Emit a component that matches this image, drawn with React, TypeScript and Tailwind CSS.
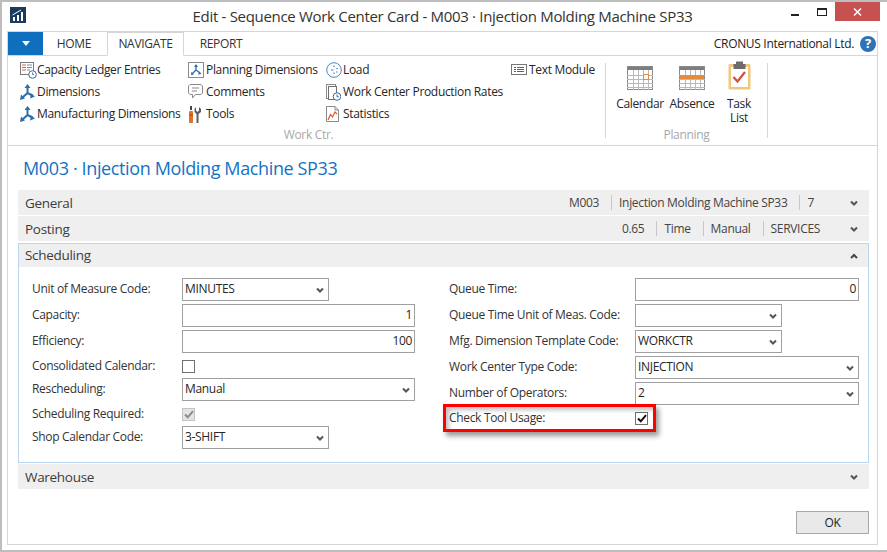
import React from "react";

const FONT = { fontFamily: '"Open Sans", "Noto Sans", sans-serif' };

const Dim = () => (
  <svg width="15" height="16" viewBox="0 0 15 16" fill="none" stroke="#2e6da8" strokeWidth="2">
    <path d="M7.500 9V3M7.500 9L2.500 13.500M7.500 9L12.500 11.500" />
    <path d="M7.500 0L10.500 4H4.500Z M0 16L1 10.500L5 14.500Z M15 12.500L10 14.500L11 9.500Z" fill="#2e6da8" stroke="none" />
  </svg>
);
const PlanDim = () => (
  <svg width="16" height="16" viewBox="0 0 16 16" fill="none">
    <rect x="0.500" y="0.500" width="15" height="15" stroke="#8a8a8a" />
    <path d="M8 8V4M8 8L4 12M8 8L12 11" stroke="#2e6da8" strokeWidth="1.300" />
    <path d="M8 2L10 5H6Z M3 13L3.400 9.800L6 12.400Z M13.500 12L10 12.400L11.400 9.400Z" fill="#2e6da8" />
  </svg>
);
const Ledger = () => (
  <svg width="17" height="17" viewBox="0 0 17 17" fill="none">
    <rect x="0.500" y="0.500" width="13" height="12" stroke="#7b7b7b" fill="#fff" />
    <path d="M2 3h4M2 5.500h4M2 8h4" stroke="#d9623a" />
    <path d="M7 3h5M7 5.500h5M7 8h3" stroke="#8a8a8a" />
    <circle cx="12.500" cy="12.500" r="3.800" fill="#fff" stroke="#2e6da8" />
    <path d="M12.500 10.500v2h1.500" stroke="#2e6da8" strokeWidth="0.800" />
  </svg>
);
const Comment = () => (
  <svg width="15" height="16" viewBox="0 0 15 16" fill="none">
    <path d="M2 .5H13L14.500 2V9L13 10.500H7.500L4.500 14V10.500H2L.5 9V2Z" stroke="#8a8a8a" />
    <path d="M4 4h7M4 7h5" stroke="#8a8a8a" />
  </svg>
);
const Tools = () => (
  <svg width="13" height="17" viewBox="0 0 13 17" fill="none">
    <path d="M3 0v4" stroke="#444" strokeWidth="2" />
    <rect x="1" y="5" width="4" height="12" rx="1" fill="#e0702c" />
    <path d="M1 9h4" stroke="#a84e18" />
    <path d="M8 1v3.500l1.500 1.500L11 4.500V1L13 3V6L10.500 8V17H8.500V8L6.500 6V3Z" fill="#5f5f5f" />
  </svg>
);
const Load = () => (
  <svg width="16" height="16" viewBox="0 0 16 16" fill="none">
    <circle cx="8" cy="8" r="7.300" stroke="#4c86bd" />
    <path d="M8 3.500v1.500M11.500 6l-1 1M11.500 10h-1.500M8 12v-1.500M5 8H7.500" stroke="#4c86bd" strokeWidth="1.200" />
  </svg>
);
const Rates = () => (
  <svg width="15" height="17" viewBox="0 0 15 17" fill="none">
    <rect x="0.500" y="0.500" width="9" height="14" stroke="#8a8a8a" fill="#fff" />
    <rect x="2.500" y="2.500" width="8" height="13" stroke="#6f6f6f" fill="#fff" />
    <circle cx="11" cy="12.500" r="3.800" fill="#fff" stroke="#2e6da8" />
    <path d="M11 10.500v2.200h1.800" stroke="#2e6da8" />
  </svg>
);
const Stats = () => (
  <svg width="13" height="16" viewBox="0 0 13 16" fill="none">
    <path d="M.5.500H9L12.500 4V15.500H.5Z" stroke="#8a8a8a" fill="#fff" />
    <path d="M9 .500V4H12.500" stroke="#8a8a8a" />
    <path d="M2 14L4.500 8.500L6.500 11L9 6L11 8" stroke="#e0552c" strokeWidth="1.200" />
  </svg>
);
const TextModule = () => (
  <svg width="16" height="12" viewBox="0 0 16 12" fill="none">
    <rect x="0.500" y="0.500" width="15" height="10" stroke="#777" />
    <path d="M3 3.500h2M6 3.500h7M3 5.500h2M6 5.500h7M3 7.500h2M6 7.500h7" stroke="#2e6da8" />
  </svg>
);

const Cal = ({ absence }: { absence?: boolean }) => {
  const xs = [6.5, 11.5, 16.5, 21.5];
  const ys = [9.5, 13.5, 17.5, 21.5];
  return (
    <svg width="26" height="24" viewBox="0 0 26 24" fill="none">
      <rect x="0" y="0" width="26" height="4" fill="#7d7d7d" />
      <rect x="0.500" y="0.500" width="25" height="23" stroke="#8a8a8a" />
      {xs.map((x) => <path key={x} d={`M${x} 4V24`} stroke="#b9b9b9" />)}
      {ys.map((y) => <path key={y} d={`M0 ${y}H26`} stroke="#b9b9b9" />)}
      {absence && <rect x="1" y="9" width="24" height="4" fill="#e58a3e" />}
      {!absence && <rect x="16.500" y="8.500" width="5" height="5" fill="#fff" stroke="#e58a3e" />}
    </svg>
  );
};
const TaskList = () => (
  <svg width="23" height="29" viewBox="0 0 23 29" fill="none">
    <rect x="0.500" y="3" width="22" height="25.500" rx="1" fill="#f0c77b" />
    <rect x="3" y="6" width="17" height="20" fill="#fff" />
    <path d="M8 0.500h7V3h2.500v5h-12V3H8Z" fill="#6c6c6c" />
    <path d="M5.500 16l4 4.500L17 11" stroke="#d0553c" strokeWidth="2.300" />
  </svg>
);

const Chevron = ({ up }: { up?: boolean }) => (
  <svg width="8" height="6" viewBox="0 0 8 6" fill="none" stroke={up ? "#444" : "#555"} strokeWidth="2">
    <path d={up ? "M1 5L4 2L7 5" : "M1 1.500L4 4.500L7 1.500"} />
  </svg>
);

const Action = ({ icon, label, iconW }: { icon: React.ReactNode; label: string; iconW: string }) => (
  <div className="flex items-center h-[22px] text-[12px] text-[#262626] whitespace-nowrap">
    <span className={`flex items-center justify-start shrink-0 ${iconW}`}>{icon}</span>
    <span>{label}</span>
  </div>
);

const BigAction = ({ icon, label, w }: { icon: React.ReactNode; label: React.ReactNode; w: string }) => (
  <div className={`flex flex-col items-center ${w}`}>
    <div className="h-[31px] flex items-end justify-center">{icon}</div>
    <div className="mt-[7px] text-[12px] leading-[14px] text-center text-[#262626] whitespace-nowrap">{label}</div>
  </div>
);

const TabHeader = ({ title, values, extra }: { title: string; values?: string[]; extra?: string }) => (
  <div className="flex items-center h-[25px] bg-[#efefef] pl-[7px] pr-[11px]">
    <span className="mt-[1px] text-[13.5px] tracking-[-0.3px] text-[#3c3c3c]">{title}</span>
    <div className={`ml-auto flex items-center text-[12px] text-[#444] ${extra ?? ""}`}>
      {values?.map((v, i) => (
        <span key={v} className={`h-[15px] leading-[15px] flex items-center ${i > 0 ? "border-l border-[#c8c8c8] ml-[12px] pl-[7px]" : ""}`}>{v}</span>
      ))}
    </div>
    <span className="ml-[30px] flex"><Chevron /></span>
  </div>
);

const Input = ({ value, select, w, align }: { value: string; select?: boolean; w: string; align?: boolean }) => (
  <div className={`${w} h-[23px] border border-[#a0a0a0] bg-white flex items-center text-[12px] text-[#262626] px-[2px] ${align ? "justify-end" : "justify-between"}`}>
    <span className="leading-none mb-[2px]">{value}</span>
    {select && <span className="mr-[2px] flex"><Chevron /></span>}
  </div>
);

const Row = ({ label, children, labelW, tall = true }: { label: string; children: React.ReactNode; labelW: string; tall?: boolean }) => (
  <div className={`flex items-center ${tall ? "h-[26px] pb-[3px]" : "h-[22px]"}`}>
    <span className={`${labelW} shrink-0 text-[12px] text-[#333] whitespace-nowrap mb-[2px]`}>{label}</span>
    {children}
  </div>
);

const Check = ({ state }: { state?: "on" | "disabled" }) => (
  <div className={`w-[13px] h-[13px] mb-[1px] border flex items-center justify-center ${state === "disabled" ? "border-[#c4c4c4] bg-[#e4e4e4]" : "border-[#707070] bg-white"}`}>
    {state && (
      <svg width="10" height="9" viewBox="0 0 10 9" fill="none" stroke={state === "on" ? "#111" : "#8c8c8c"} strokeWidth="2">
        <path d="M1 4.500L3.800 7.300L9 1.200" />
      </svg>
    )}
  </div>
);

export default function App() {
  return (
    <div style={FONT} className="w-[887px] h-[552px] overflow-hidden bg-white border-2 border-r-0 border-[#bdbdbd] flex flex-col tracking-[-0.32px]">
      {/* title bar */}
      <div className="relative h-[29px] shrink-0 flex items-center justify-center pr-[4px]">
        <svg className="absolute left-[8px] top-[5px]" width="16" height="16" viewBox="0 0 16 16">
          <rect width="16" height="16" fill="#1a3a5e" />
          <path d="M3 14V10H5V14ZM7 14V8H9V14ZM11 14V5H13V14Z" fill="#fff" />
          <path d="M2.500 8L11 3" stroke="#fff" />
        </svg>
        <span className="text-[15px] text-[#333] tracking-[-0.31px] whitespace-nowrap">Edit - Sequence Work Center Card - M003 · Injection Molding Machine SP33</span>
        <div className="absolute right-[7px] top-0 flex items-start">
          <div className="w-[8px] h-[2px] bg-[#222] mt-[12px] mr-[18px]" />
          <div className="w-[10px] h-[8px] border border-[#222] border-t-2 mt-[6px] mr-[8px]" />
          <div className="w-[45px] h-[19px] bg-[#c75050] flex items-center justify-center">
            <svg width="9" height="8" viewBox="0 0 9 8" stroke="#fff" strokeWidth="1.500"><path d="M1 0.500L8 7.500M8 0.500L1 7.500" /></svg>
          </div>
        </div>
      </div>

      {/* main frame */}
      <div className="ml-[5px] mr-[9px] flex-1 border border-[#d6d6d6] flex flex-col mb-[5px] min-h-0">
        {/* tabs */}
        <div className="flex items-end h-[24px] shrink-0 border-b border-[#d6d6d6] text-[12px] text-[#333]">
          <div className="w-[35px] h-[23px] bg-[#106ebe] self-start flex items-center justify-center">
            <svg width="8" height="5" viewBox="0 0 8 5" fill="#fff"><path d="M0 0H8L4 5Z" /></svg>
          </div>
          <div className="w-[64px] h-[23px] pr-[2px] flex items-center justify-center">HOME</div>
          <div className="w-[77px] h-[24px] -mb-px border border-[#d6d6d6] border-b-white bg-white flex items-center justify-center">NAVIGATE</div>
          <div className="w-[74px] h-[23px] flex items-center justify-center">REPORT</div>
          <div className="ml-auto h-[23px] flex items-center text-[#222]">
            <span>CRONUS International Ltd.</span>
            <span className="ml-[6px] mr-[1px] w-[16px] h-[16px] rounded-full bg-[#2f73b5] text-white text-[13px] font-bold flex items-center justify-center">?</span>
          </div>
        </div>

        {/* ribbon */}
        <div className="h-[90px] shrink-0 border-b border-[#d6d6d6] flex pt-[3px]">
          <div className="w-[597px] flex flex-col pl-[12px]">
            <div className="flex">
              <div className="w-[168px]">
                <Action iconW="w-[17px]" icon={<Ledger />} label="Capacity Ledger Entries" />
                <Action iconW="w-[17px]" icon={<Dim />} label="Dimensions" />
                <Action iconW="w-[17px]" icon={<Dim />} label="Manufacturing Dimensions" />
              </div>
              <div className="w-[138px]">
                <Action iconW="w-[18px]" icon={<PlanDim />} label="Planning Dimensions" />
                <Action iconW="w-[18px]" icon={<Comment />} label="Comments" />
                <Action iconW="w-[18px]" icon={<Tools />} label="Tools" />
              </div>
              <div className="w-[185px]">
                <Action iconW="w-[17px]" icon={<Load />} label="Load" />
                <Action iconW="w-[17px]" icon={<Rates />} label="Work Center Production Rates" />
                <Action iconW="w-[17px]" icon={<Stats />} label="Statistics" />
              </div>
              <div>
                <Action iconW="w-[18px]" icon={<TextModule />} label="Text Module" />
              </div>
            </div>
            <div className="text-center text-[12px] text-[#a8a8a8] mt-[2px] pr-[8px] leading-[16px]">Work Ctr.</div>
          </div>
          <div className="w-px h-[75px] mt-[4px] bg-[#d6d6d6]" />
          <div className="w-[161px] flex flex-col">
            <div className="flex pl-[7px] h-[68px]">
              <BigAction w="w-[54px]" icon={<Cal />} label="Calendar" />
              <BigAction w="w-[50px]" icon={<Cal absence />} label="Absence" />
              <BigAction w="w-[44px]" icon={<TaskList />} label={<>Task<br />List</>} />
            </div>
            <div className="text-center text-[12px] text-[#a8a8a8] leading-[16px]">Planning</div>
          </div>
          <div className="w-px h-[75px] mt-[4px] bg-[#d6d6d6]" />
        </div>

        {/* body */}
        <div className="flex-1 flex flex-col pl-[10px] pr-[8px] min-h-0">
          <h1 className="mt-[10px] mb-[10px] h-[24px] pl-[5px] text-[18px] leading-[24px] text-[#1273c4] font-normal tracking-[-0.37px]">M003 · Injection Molding Machine SP33</h1>
          <TabHeader title="General" extra="mr-[6px]" values={["M003", "Injection Molding Machine SP33", "7"]} />
          <div className="h-px" />
          <TabHeader title="Posting" values={["0.65", "Time", "Manual", "SERVICES"]} />
          <div className="h-[2px]" />

          {/* scheduling */}
          <div className="h-[220px] border border-[#bcd6f2] flex flex-col">
            <div className="h-[23px] bg-[#efefef] flex items-center pl-[6px] pr-[10px] justify-between">
              <span className="text-[13.5px] tracking-[-0.3px] text-[#3c3c3c]">Scheduling</span>
              <Chevron up />
            </div>
            <div className="flex pt-[11px] pl-[13px]">
              <div className="w-[417px]">
                <Row labelW="w-[150px]" label="Unit of Measure Code:"><Input select w="w-[147px]" value="MINUTES" /></Row>
                <Row labelW="w-[150px]" label="Capacity:"><Input align w="w-[233px]" value="1" /></Row>
                <Row labelW="w-[150px]" label="Efficiency:"><Input align w="w-[233px]" value="100" /></Row>
                <Row labelW="w-[150px]" tall={false} label="Consolidated Calendar:"><Check /></Row>
                <Row labelW="w-[150px]" label="Rescheduling:"><Input select w="w-[233px]" value="Manual" /></Row>
                <Row labelW="w-[150px]" tall={false} label="Scheduling Required:"><Check state="disabled" /></Row>
                <Row labelW="w-[150px]" label="Shop Calendar Code:"><Input select w="w-[147px]" value="3-SHIFT" /></Row>
              </div>
              <div className="relative">
                <Row labelW="w-[186px]" label="Queue Time:"><Input align w="w-[224px]" value="0" /></Row>
                <Row labelW="w-[186px]" label="Queue Time Unit of Meas. Code:"><Input select w="w-[147px]" value="" /></Row>
                <Row labelW="w-[186px]" label="Mfg. Dimension Template Code:"><Input select w="w-[147px]" value="WORKCTR" /></Row>
                <Row labelW="w-[186px]" label="Work Center Type Code:"><Input select w="w-[224px]" value="INJECTION" /></Row>
                <Row labelW="w-[186px]" label="Number of Operators:"><Input select w="w-[224px]" value="2" /></Row>
                <Row labelW="w-[186px]" tall={false} label="Check Tool Usage:"><Check state="on" /></Row>
                <div className="absolute left-[-6px] top-[126px] w-[213px] h-[28px] border-[3px] border-[#ff0000] shadow-[3px_4px_5px_rgba(0,0,0,0.4),inset_3px_3px_4px_rgba(0,0,0,0.25)]" />
              </div>
            </div>
          </div>

          <div className="h-px" />
          <TabHeader title="Warehouse" />
          <div className="mt-[22px] flex justify-end">
            <div className="w-[73px] h-[23px] border border-[#a8a8a8] bg-[#e9e9e9] flex items-center justify-center text-[12px] text-[#222]">OK</div>
          </div>
        </div>
      </div>
    </div>
  );
}
